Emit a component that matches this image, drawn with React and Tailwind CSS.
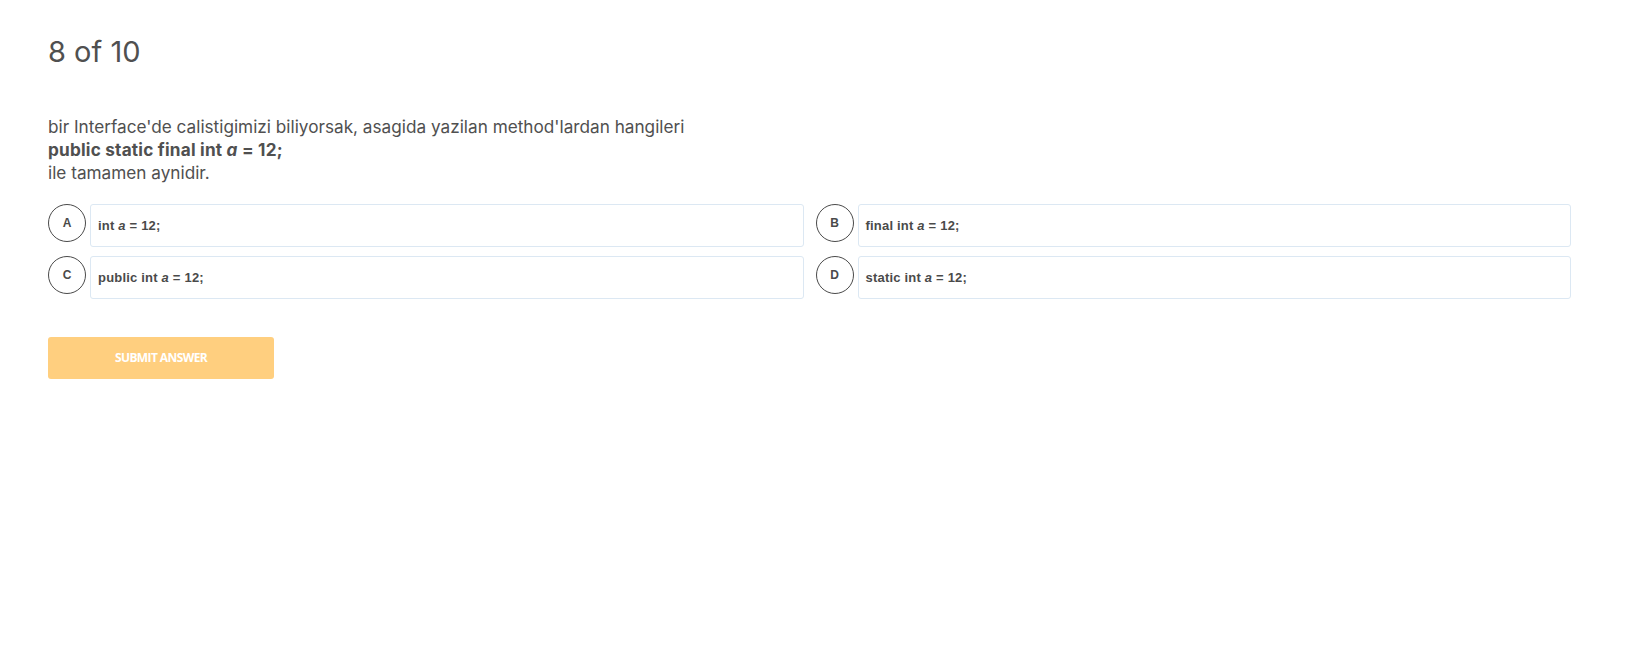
const options = [
  { key: 'A', pre: 'int' },
  { key: 'B', pre: 'final int' },
  { key: 'C', pre: 'public int' },
  { key: 'D', pre: 'static int' },
]

function Option({ letter, pre }) {
  return (
    <div className="flex items-start gap-[4px]">
      <div className="flex h-[38px] w-[38px] shrink-0 items-center justify-center rounded-full border border-[#4a4a4a] font-['Liberation_Sans',Arial,sans-serif] text-[12px] font-bold text-[#4a4a4a]">
        {letter}
      </div>
      <div className="flex h-[43px] flex-1 items-center rounded-[3px] border border-[#dce8f3] bg-white pl-[7px] font-['Liberation_Sans',Arial,sans-serif] text-[13px] font-bold tracking-[0.2px] text-[#4a4a4a]">
        <span>
          {pre} <i>a</i> = 12;
        </span>
      </div>
    </div>
  )
}

export default function App() {
  return (
    <div className="min-h-[661px] bg-white pl-[48px] pt-[35px] font-['Inter',sans-serif] text-[#505050]">
      <h1 className="text-[29px] font-normal leading-[34px]">8 of 10</h1>
      <div className="mt-[46px] text-[17.2px] leading-[23px]">
        <p>bir Interface'de calistigimizi biliyorsak, asagida yazilan method'lardan hangileri</p>
        <p className="font-bold tracking-[0.2px]">
          public static final int <i>a</i> = 12;
        </p>
        <p>ile tamamen aynidir.</p>
      </div>
      <div className="mt-[20px] grid w-[1523px] grid-cols-2 gap-x-[12px] gap-y-[9px]">
        {options.map((o) => (
          <Option key={o.key} letter={o.key} pre={o.pre} />
        ))}
      </div>
      <button
        type="button"
        className="mt-[38px] flex h-[42px] w-[226px] items-center justify-center rounded-[3px] bg-[#ffcf7f] font-['Open_Sans',sans-serif] text-[12px] font-bold tracking-[-0.6px] text-white"
      >
        SUBMIT ANSWER
      </button>
    </div>
  )
}
